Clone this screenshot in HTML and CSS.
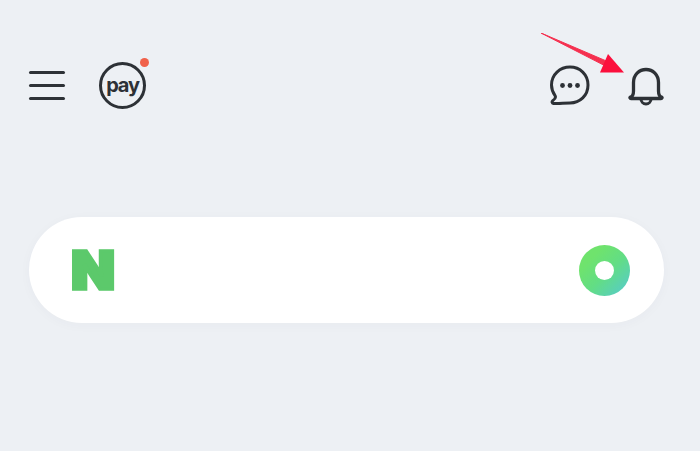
FILE: index.html
```html
<!DOCTYPE html>
<html lang="ko">
<head>
    <meta charset="UTF-8">
    <title>NAVER</title>
    <link rel="stylesheet" href="styles.css">
</head>
<body>
    <!-- top bar -->
    <header class="topbar">
        <div class="topbar-left">
            <div class="menu-icon">
                <span></span>
                <span></span>
                <span></span>
            </div>
            <div class="pay-badge">
                <span class="pay-text">pay</span>
                <span class="pay-dot"></span>
            </div>
        </div>
        <div class="topbar-right">
            <svg class="chat-icon" width="40" height="40" viewBox="0 0 40 40" fill="none">
                <path d="M20 2C30 2 38 9.500 38 20S30 38 20 38C14.500 38 7 39 3.500 38.500C2 38.200 1.600 36.600 2.800 35.600C5 34 6 32.400 5.200 30.800C3 27.800 1.500 24 1.500 20C1.500 9.500 10 2 20 2Z" stroke="#2d3136" stroke-width="3" stroke-linejoin="round"/>
                <circle cx="12.500" cy="20.500" r="2.400" fill="#2d3136"/>
                <circle cx="20" cy="20.500" r="2.400" fill="#2d3136"/>
                <circle cx="27.500" cy="20.500" r="2.400" fill="#2d3136"/>
            </svg>
            <svg class="bell-icon" width="36" height="39" viewBox="0 0 36 39" fill="none">
                <path d="M5.500 15.500C5.500 8 11 2.500 18 2.500S30.500 8 30.500 15.500V24C30.500 27.500 31.500 29.500 33.500 30C34.500 30.500 34 31.500 33 31.500H3C2 31.500 1.500 30.500 2.500 30C4.500 29.500 5.500 27.500 5.500 24Z" stroke="#2d3136" stroke-width="3.300" stroke-linejoin="round"/>
                <path d="M13 32A5 5 0 0 0 23 32" stroke="#2d3136" stroke-width="3"/>
            </svg>
        </div>
    </header>

    <!-- search box -->
    <div class="search-bar">
        <span class="naver-n">N</span>
        <span class="lens"></span>
    </div>

    <!-- red annotation arrow -->
    <svg class="arrow" width="90" height="48" viewBox="0 0 90 48">
        <path d="M0 0L67 28.700L65 33.300Z" fill="#f5304f" stroke="#f5304f" stroke-width="1" stroke-linejoin="round"/>
        <path d="M67 21L59 39.500H83Z" fill="#fb0f3c"/>
    </svg>
</body>
</html>
```

FILE: styles.css
```css
/* base */
body {
    position: relative;
    margin: 0;
    height: 451px;
    overflow: hidden;
    background-color: #edf0f4;
    font-family: Inter, "Liberation Sans", sans-serif;
}

/* top bar */
.topbar {
    display: flex;
    justify-content: space-between;
    align-items: center;
    height: 46px;
    padding: 62px 36px 0 29px;
}

.topbar-left {
    display: flex;
    align-items: center;
    gap: 34px;
}

.topbar-right {
    display: flex;
    align-items: center;
    gap: 38px;
}

.menu-icon {
    display: flex;
    flex-direction: column;
    gap: 10px;
    width: 36px;
}

.menu-icon span {
    height: 3px;
    border-radius: 2px;
    background-color: #2d3136;
}

.pay-badge {
    position: relative;
    display: flex;
    justify-content: center;
    align-items: center;
    width: 47px;
    height: 47px;
    box-sizing: border-box;
    border: 3px solid #2d3136;
    border-radius: 50%;
}

.pay-text {
    margin-top: -1px;
    color: #2d3136;
    font-size: 20px;
    font-weight: 700;
    letter-spacing: -1.2px;
}

.pay-dot {
    position: absolute;
    top: -7px;
    right: -6px;
    width: 9px;
    height: 9px;
    border-radius: 50%;
    background-color: #f0614a;
}

.bell-icon {
    margin-top: 2px;
}

/* search box */
.search-bar {
    display: flex;
    justify-content: space-between;
    align-items: center;
    width: 635px;
    height: 106px;
    box-sizing: border-box;
    margin: 109px 0 0 29px;
    padding: 0 34px 0 44px;
    border-radius: 53px;
    background-color: #fff;
    box-shadow: 0 2px 12px rgba(60, 70, 90, 0.03);
}

.naver-n {
    margin-top: 2px;
    color: #5cc96b;
    font-size: 52px;
    font-weight: 900;
    line-height: 1;
    -webkit-text-stroke: 3.5px #5cc96b;
    transform: scaleX(1.09);
}

.lens {
    width: 51px;
    height: 51px;
    box-sizing: border-box;
    border: 16px solid transparent;
    border-radius: 50%;
    background: linear-gradient(#fff, #fff) padding-box, linear-gradient(135deg, #6fe36d 25%, #62dd85 55%, #55c9d3 100%) border-box;
}

/* annotation */
.arrow {
    position: absolute;
    top: 33px;
    left: 541px;
}
```
